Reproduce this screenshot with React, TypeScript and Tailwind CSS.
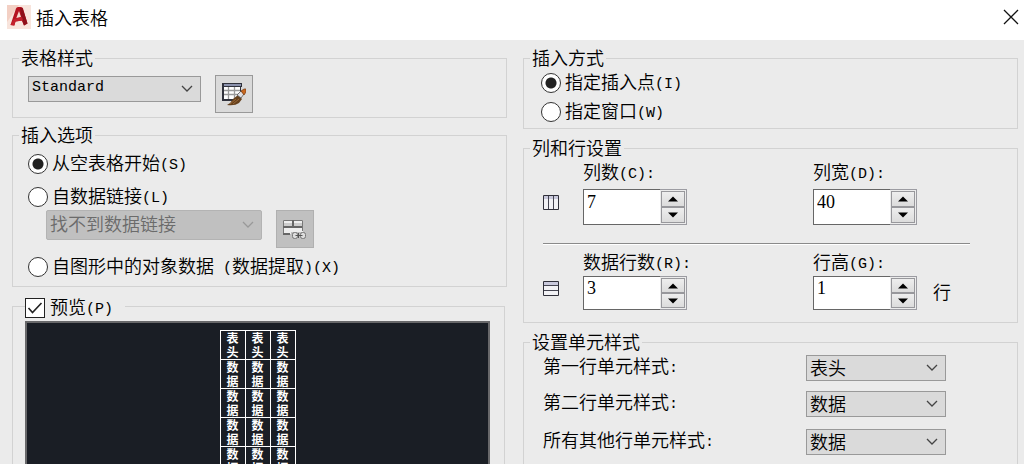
import { Fragment, useState } from "react";
import type { ComponentProps, ReactNode } from "react";
import clsx from "clsx";

// Latin characters sit on a half-width grid next to the full-width CJK ones.
function Mixed({ text }: { text: string }) {
  return (
    <>
      {text.split(/([\x20-\x7e]+)/).map((part, index) =>
        index % 2 === 1 ? (
          <span
            key={index}
            className="whitespace-pre align-[1px] font-['Liberation_Mono',monospace] text-[15px] leading-none"
          >
            {part}
          </span>
        ) : (
          <Fragment key={index}>{part}</Fragment>
        ),
      )}
    </>
  );
}

function Group({ title, className, children }: { title: string; className?: string; children: ReactNode }) {
  return (
    <fieldset className={clsx("min-w-0 border border-[#d2d2d2]", className)}>
      <legend className="ml-1.5 h-5 px-0.5 leading-[18px]">{title}</legend>
      {children}
    </fieldset>
  );
}

function Radio({ label, ...props }: { label: string } & ComponentProps<"input">) {
  return (
    <label className="flex h-6 items-center gap-1 leading-5">
      <input
        type="radio"
        className="size-5 shrink-0 appearance-none rounded-full border border-[#333] bg-white checked:bg-[radial-gradient(circle,#222_5px,#fff_6px)]"
        {...props}
      />
      <span className="pb-1">
        <Mixed text={label} />
      </span>
    </label>
  );
}

function Select({ options, className, ...props }: { options: string[] } & ComponentProps<"select">) {
  return (
    <div className={clsx("relative", className)}>
      <select
        className="block size-full appearance-none border border-[#999] bg-[#dadada] pb-0.5 pl-[3px] leading-5 text-black disabled:rounded-xs disabled:border-[#b3b3b3] disabled:bg-[#c0c0c0] disabled:pb-1 disabled:text-[#6b6b6b] disabled:opacity-100"
        {...props}
      >
        {options.map((option) => (
          <option key={option}>{option}</option>
        ))}
      </select>
      <svg
        className={clsx("pointer-events-none absolute right-2 top-1/2 -mt-1", props.disabled ? "text-[#999]" : "text-[#444]")}
        width="12"
        height="8"
        viewBox="0 0 12 8"
        fill="none"
        stroke="currentColor"
        strokeWidth="1.3"
        aria-hidden="true"
      >
        <path d="M1 1l5 5 5-5" />
      </svg>
    </div>
  );
}

function Arrow({ down }: { down?: boolean }) {
  return (
    <svg width="10" height="6" viewBox="0 0 10 6" aria-hidden="true">
      <path d={down ? "M0 .5h10L5 5.5z" : "M0 5.5h10L5 .5z"} fill="#000" />
    </svg>
  );
}

function Spinner({ id, label, initial, className }: { id: string; label: string; initial: number; className: string }) {
  const [value, setValue] = useState(initial);
  const button =
    "flex min-h-0 flex-1 items-center justify-center border border-[#98989c] bg-linear-to-b from-[#eee] to-[#dcdcdc]";

  return (
    <div className={clsx("flex w-[104px]", className)}>
      <input
        id={id}
        type="text"
        value={value}
        onChange={(event) => setValue(Number(event.target.value) || 0)}
        className="w-[77px] border border-r-0 border-[#666] bg-white pb-2.5 pl-[3px] font-['Liberation_Serif',serif] text-[18px] leading-5"
      />
      <div className="flex flex-1 flex-col border border-l-0 border-[#9c9ca2] bg-[#ececec] p-px">
        <button type="button" className={button} aria-label={`${label} +`} onClick={() => setValue(value + 1)}>
          <Arrow />
        </button>
        <button type="button" className={button} aria-label={`${label} -`} onClick={() => setValue(value - 1)}>
          <Arrow down />
        </button>
      </div>
    </div>
  );
}

function Logo() {
  return (
    <svg width="24" height="24" viewBox="0 0 24 24" aria-hidden="true">
      <path d="M0 0h24v24H0z" fill="#f8e4dc" />
      <path d="M0 0h12L0 17z" fill="#f3d0c4" />
      <path d="M3.5 20 9 3.5Q9.5 2 11 2h3q1.500 0 2 1.500L20.500 18.500 17 20.500 14.800 15.500 8.500 16.500 7.300 20.500z" fill="#b5121f" />
      <path d="M13 3h2.500l5 15.500L17 20.500 14.500 13z" fill="#8e0f19" />
      <path d="M9.300 13 12 6l2 6z" fill="#f6d9cf" />
      <path d="M3.500 20 7 14l8-2 1 3.500-7.500 1-1.200 4z" fill="#c4202c" />
    </svg>
  );
}

function TableStyleIcon() {
  return (
    <svg width="24" height="24" viewBox="0 0 24 24" aria-hidden="true">
      <path d="M0 1h20v18H0z" fill="#30323c" />
      <path d="M2 2h17v2H2z" fill="#8b92ad" />
      <path d="M2 5h16v12H2z" fill="#fff" />
      <path d="M6.500 5v12M12.500 5v12M2 8.500h16M2 12.500h16" stroke="#999" strokeWidth="1.300" />
      <path d="M18 5h2v14h-2z" fill="#dadada" />
      <path d="M18.500 5v6" stroke="#30323c" />
      <path d="m11 17 5-4 4 4-3 4q-4 3-12 2 4-2 6-6z" fill="#65401c" />
      <path d="m8 22 6-5m-3 5 6-5" stroke="#9b6734" />
      <path d="m15 13 4-4 3 3-3 4z" fill="#dedee2" stroke="#555" strokeWidth=".8" />
      <path d="m19 9 3-2h2v3l-2 3z" fill="#c9681f" stroke="#733b16" strokeWidth=".7" />
    </svg>
  );
}

function DataLinkIcon() {
  return (
    <svg width="24" height="20" viewBox="0 0 24 20" aria-hidden="true">
      <path d="M0 1h20v14H0z" fill="#eee" />
      <path d="M1 4h18v3H1z" fill="#ccc" />
      <path d="M.5 15V1.500h19V12" stroke="#777" fill="none" />
      <path d="M0 8h19M0 15h7M10 1v8" stroke="#666" strokeWidth="2" fill="none" />
      <path d="M8 13h16v7H8z" fill="#c0c0c0" />
      <rect x="9.500" y="13.500" width="5" height="6" rx="2" fill="#ddd" stroke="#777" />
      <rect x="17.500" y="13.500" width="5" height="6" rx="2" fill="#ddd" stroke="#777" />
      <path d="M12.500 16.500h7M15.500 14v5" stroke="#555" />
    </svg>
  );
}

function GridIcon({ rows }: { rows?: boolean }) {
  return (
    <svg width="16" height="16" viewBox="0 0 16 16" aria-hidden="true">
      <path d="M.5.500h15v14H.5z" fill="#f2f2f5" />
      <path d="M1 1h14v3H1z" fill="#c9c9dc" />
      {rows ? (
        <path d="M.5 4.500h15M.5 9.500h15" stroke="#444450" />
      ) : (
        <path d="M5.500.500v14M10.500.500v14" stroke="#444450" />
      )}
      <path d="M.5.500h15v14H.5z" fill="none" stroke="#30303a" />
    </svg>
  );
}

const previewRows = ["表头", "数据", "数据", "数据", "数据"];
const cellStyles = [
  { id: "first-row", label: "第一行单元样式:", options: ["表头", "标题", "数据"], gap: "" },
  { id: "second-row", label: "第二行单元样式:", options: ["数据", "表头", "标题"], gap: "mt-2.5" },
  { id: "other-rows", label: "所有其他行单元样式:", options: ["数据", "表头", "标题"], gap: "mt-3" },
];

export default function App() {
  return (
    <div className="flex h-screen flex-col overflow-hidden bg-[#ebebeb] font-['Noto_Sans_CJK_SC',sans-serif] text-[18px] font-[350] text-black">
      <header className="flex h-10 shrink-0 items-center bg-white pb-1.5 pl-[7px] pr-px">
        <Logo />
        <h1 className="ml-[5px] leading-6">插入表格</h1>
        <button type="button" aria-label="关闭" className="ml-auto flex size-6 items-center justify-center">
          <svg width="16" height="16" viewBox="0 0 16 16" stroke="#111" strokeWidth="1.300" aria-hidden="true">
            <path d="m1 1 14 14M15 1 1 15" />
          </svg>
        </button>
      </header>

      <main className="grid min-h-0 flex-1 grid-cols-2 gap-4 pl-3 pr-1.5 pt-2">
        <div className="flex min-h-0 min-w-0 flex-col">
          <Group title="表格样式">
            <div className="flex items-start gap-3.5 pb-1 pl-[15px] pt-[7px]">
              <Select
                aria-label="表格样式"
                options={["Standard"]}
                className="mt-px h-[26px] w-[173px] font-['Liberation_Mono',monospace] text-[15px]"
              />
              <button
                type="button"
                aria-label="表格样式设置"
                className="flex size-[38px] items-center justify-center border border-[#999] bg-[#dadada]"
              >
                <TableStyleIcon />
              </button>
            </div>
          </Group>

          <Group title="插入选项" className="mt-[7px]">
            <div className="py-[7px] pl-[15px]">
              <Radio name="source" label="从空表格开始(S)" defaultChecked />
              <div className="mt-[9px]">
                <Radio name="source" label="自数据链接(L)" />
              </div>
              <div className="mt-px flex items-start gap-3.5 pl-[18px]">
                <Select aria-label="数据链接" options={["找不到数据链接"]} className="h-[30px] w-[216px]" disabled />
                <button
                  type="button"
                  disabled
                  aria-label="数据链接管理器"
                  className="flex size-[38px] items-center justify-center border border-[#b0b0b0] bg-[#c0c0c0]"
                >
                  <DataLinkIcon />
                </button>
              </div>
              <div className="mt-[7px]">
                <Radio name="source" label="自图形中的对象数据 (数据提取)(X)" />
              </div>
            </div>
          </Group>

          <fieldset className="mr-0.5 mt-[7px] flex min-h-0 min-w-0 flex-1 flex-col border border-b-0 border-[#d2d2d2]">
            <legend className="ml-3 h-6 pr-3 pt-1">
              <label className="flex h-5 items-center gap-[5px] leading-5">
                <span className="relative size-5">
                  <input
                    type="checkbox"
                    defaultChecked
                    className="peer block size-5 appearance-none border border-[#222] bg-white"
                  />
                  <svg
                    className="pointer-events-none absolute inset-0 hidden peer-checked:block"
                    viewBox="0 0 20 20"
                    fill="none"
                    stroke="#222"
                    strokeWidth="1.600"
                    aria-hidden="true"
                  >
                    <path d="m3.500 10 4 4.500 9-9.500" />
                  </svg>
                </span>
                <span className="pb-1">
                  <Mixed text="预览(P)" />
                </span>
              </label>
            </legend>
            <div className="ml-3 mr-3.5 mt-[3px] border-2 border-b-0 border-[#68686a] bg-[#1a1e25] pt-[7px]">
              <table className="mx-auto border-collapse text-[12px] font-bold leading-[14px] text-white">
                <tbody>
                  {previewRows.map((text, row) => (
                    <tr key={row}>
                      {[0, 1, 2].map((column) => (
                        <td key={column} className="w-[25px] border border-white p-0">
                          <span className="mx-auto block w-3 break-all">{text}</span>
                        </td>
                      ))}
                    </tr>
                  ))}
                </tbody>
              </table>
            </div>
          </fieldset>
        </div>

        <div className="flex min-h-0 min-w-0 flex-col">
          <Group title="插入方式">
            <div className="flex flex-col gap-[5px] pb-1 pl-[17px] pt-[3px]">
              <Radio name="placement" label="指定插入点(I)" defaultChecked />
              <Radio name="placement" label="指定窗口(W)" />
            </div>
          </Group>

          <Group title="列和行设置" className="mt-[9px]">
            <div className="pb-3 pl-[19px] pr-[47px] pt-[3px]">
              <div className="grid grid-cols-[40px_230px_auto]">
                <div className="pt-[34px]">
                  <GridIcon />
                </div>
                <div>
                  <label htmlFor="columns" className="block h-6 leading-5">
                    <Mixed text="列数(C):" />
                  </label>
                  <Spinner id="columns" label="列数" initial={7} className="mt-1 h-9" />
                </div>
                <div>
                  <label htmlFor="column-width" className="block h-6 leading-5">
                    <Mixed text="列宽(D):" />
                  </label>
                  <Spinner id="column-width" label="列宽" initial={40} className="mt-1 h-9" />
                </div>
              </div>
              <hr className="mt-[18px] h-0.5 border-b border-t border-b-white border-t-[#8a8a8a]" />
              <div className="mt-1.5 grid grid-cols-[40px_230px_auto]">
                <div className="pt-[30px]">
                  <GridIcon rows />
                </div>
                <div>
                  <label htmlFor="rows" className="block h-6 leading-5">
                    <Mixed text="数据行数(R):" />
                  </label>
                  <Spinner id="rows" label="数据行数" initial={3} className="mt-px h-[34px]" />
                </div>
                <div>
                  <label htmlFor="row-height" className="block h-6 leading-5">
                    <Mixed text="行高(G):" />
                  </label>
                  <div className="mt-px flex items-center gap-4">
                    <Spinner id="row-height" label="行高" initial={1} className="h-[34px]" />
                    <span className="pb-1 leading-5">行</span>
                  </div>
                </div>
              </div>
            </div>
          </Group>

          <Group title="设置单元样式" className="mt-[9px] flex-1 border-b-0">
            <div className="pl-[19px] pr-[71px] pt-[3px]">
              {cellStyles.map(({ id, label, options, gap }) => (
                <div key={id} className={clsx("flex justify-between", gap)}>
                  <label htmlFor={id} className="h-6 leading-5">
                    <Mixed text={label} />
                  </label>
                  <Select id={id} options={options} className="h-[26px] w-[140px]" />
                </div>
              ))}
            </div>
          </Group>
        </div>
      </main>
    </div>
  );
}
